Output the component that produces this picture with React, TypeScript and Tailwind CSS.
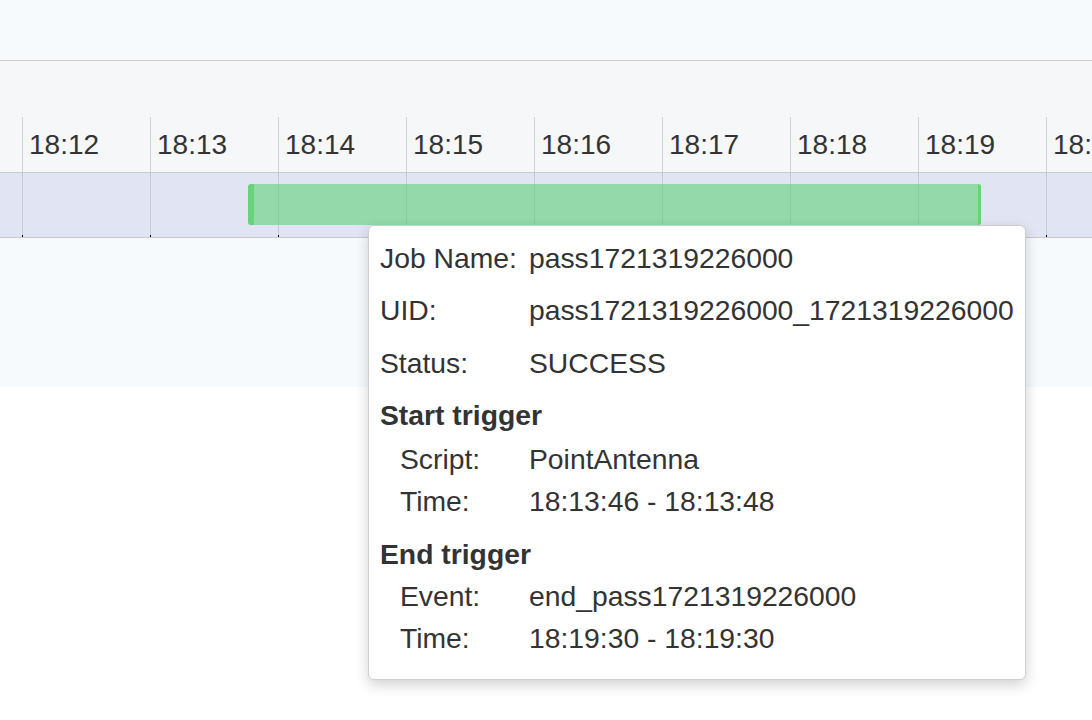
import React from 'react';

const ticks = ['18:11', '18:12', '18:13', '18:14', '18:15', '18:16', '18:17', '18:18', '18:19', '18:20'];

function Row({ label, value, sub, h }: { label: string; value: string; sub?: boolean; h: string }) {
  return (
    <div className={`flex items-center ${h}`}>
      <div className={sub ? 'w-[149px] shrink-0 pl-[20px]' : 'w-[149px] shrink-0'}>{label}</div>
      <div className="whitespace-nowrap">{value}</div>
    </div>
  );
}

export default function App() {
  return (
    <div className="relative w-[1092px] h-[720px] overflow-hidden bg-white font-['Liberation_Sans',Arial,sans-serif] text-[#333]">
      {/* top band */}
      <div className="h-[61px] bg-[#f7fafc] border-b border-[#c9c9c9]" />

      {/* time axis header */}
      <div className="h-[112px] bg-[#f6f7f9] border-b border-[#c9c9c9] flex flex-col">
        <div className="h-[56px]" />
        <div className="h-[55px] flex ml-[-106px]">
          {ticks.map((t, i) => (
            <div key={t} className="w-[128px] shrink-0 border-l border-[#d2d2d4] pl-[6px] flex items-center text-[28px] leading-none">
              {i === 0 ? '' : t}
            </div>
          ))}
        </div>
      </div>

      {/* job row */}
      <div className="relative h-[65px] bg-[#e1e4f2] border-b border-[#c9c9c9]">
        <div className="flex h-full ml-[-106px]">
          {ticks.map(t => (
            <div key={t} className="relative w-[128px] shrink-0 border-l border-[#c8c9d8]">
              <div className="absolute bottom-0 left-[-1px] w-px h-[2px] bg-black" />
            </div>
          ))}
        </div>
        {/* job bar */}
        <div className="absolute left-[248px] top-[11px] w-[733px] h-[41px] rounded-[3px] bg-[#5fd278]/60 flex justify-between overflow-hidden">
          <div className="w-[6px] h-full bg-[#6ad27a] rounded-l-[3px]" />
          <div className="w-[3px] h-full bg-[#6ad27a]" />
        </div>
      </div>

      {/* area below */}
      <div className="h-[149px] bg-[#f7fafd]" />

      {/* tooltip */}
      <div className="absolute left-[368px] top-[225px] w-[658px] bg-white border border-[#cfcfcf] rounded-[6px] shadow-[0_5px_14px_rgba(0,0,0,0.18)] pl-[11px] pr-[8px] pt-[6px] pb-[20px] text-[28.3px] leading-[32px]">
        <Row h="h-[52px]" label="Job Name:" value="pass1721319226000" />
        <Row h="h-[52px]" label="UID:" value="pass1721319226000_1721319226000" />
        <Row h="h-[53px]" label="Status:" value="SUCCESS" />
        <div className="h-[49px] pt-[3px] flex items-center font-bold">Start trigger</div>
        <Row sub h="h-[42px]" label="Script:" value="PointAntenna" />
        <Row sub h="h-[42px]" label="Time:" value="18:13:46 - 18:13:48" />
        <div className="h-[53px] pt-[10px] flex items-center font-bold">End trigger</div>
        <Row sub h="h-[42px]" label="Event:" value="end_pass1721319226000" />
        <Row sub h="h-[42px]" label="Time:" value="18:19:30 - 18:19:30" />
      </div>
    </div>
  );
}
